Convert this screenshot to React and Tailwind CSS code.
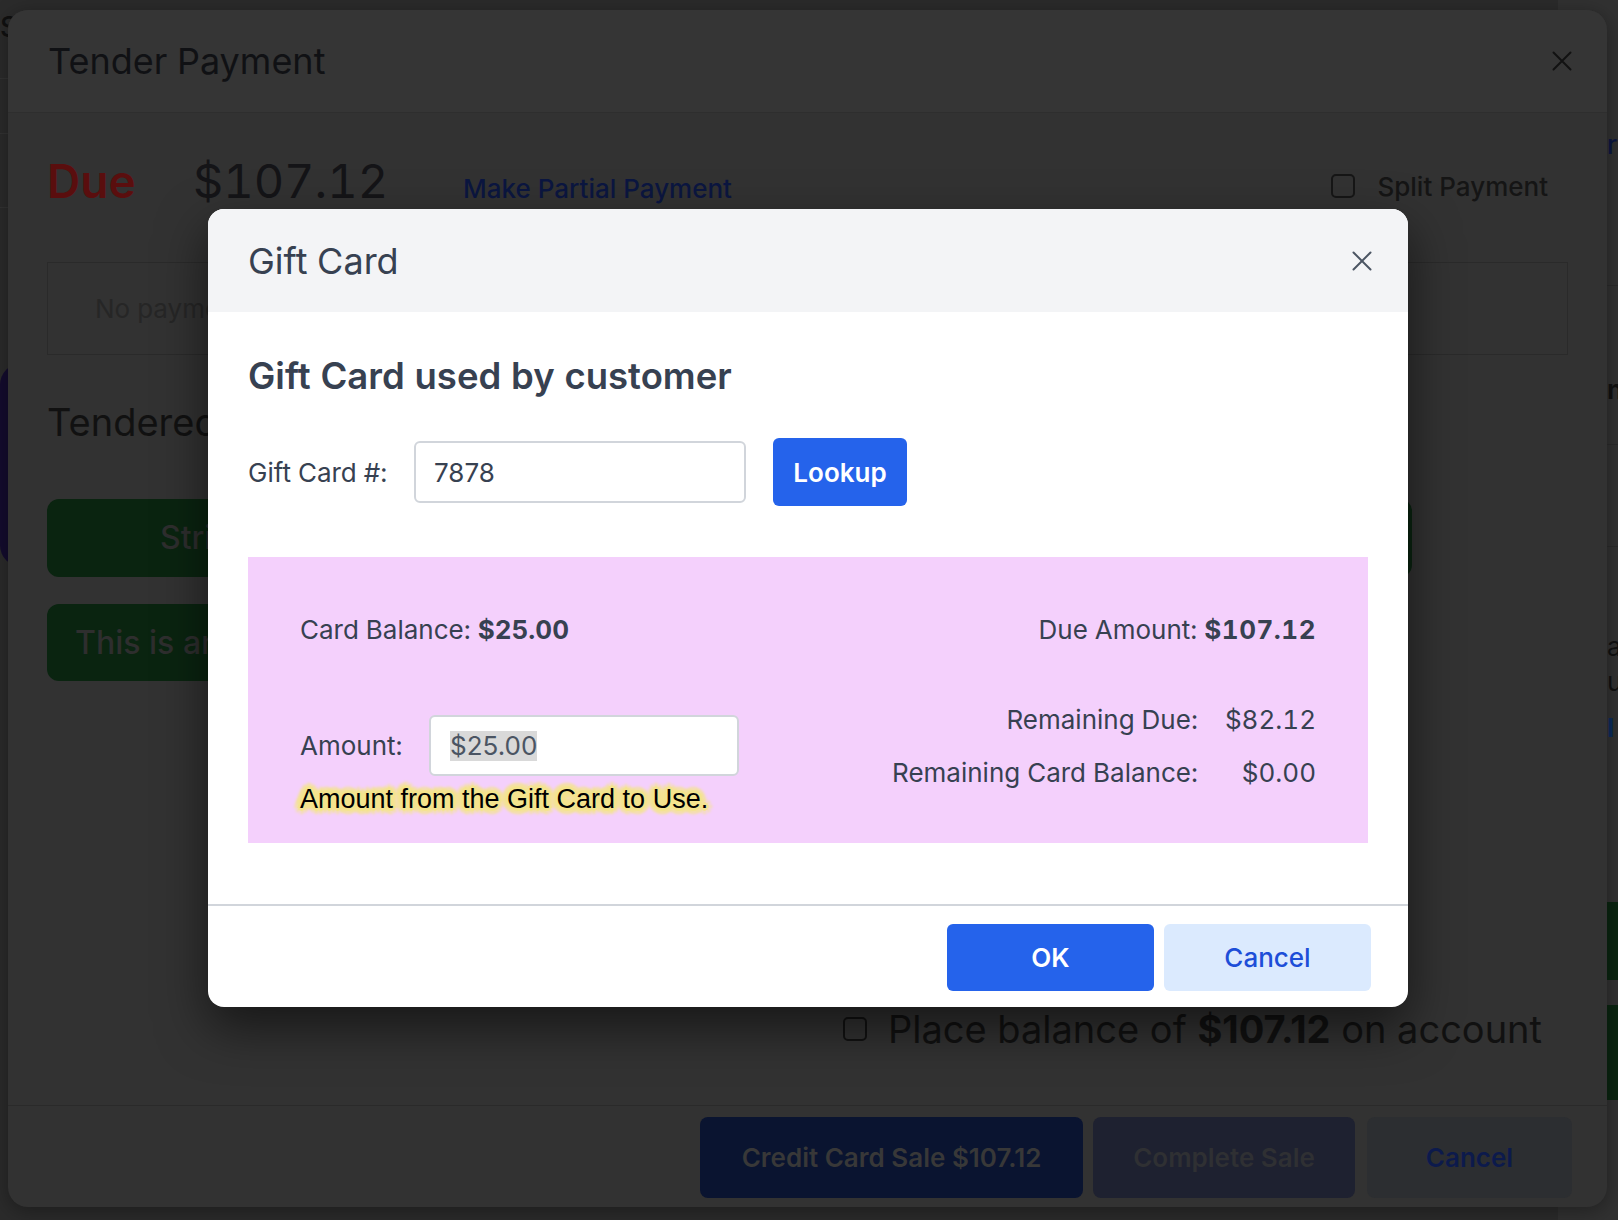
import React from 'react';

const XIcon = ({ className }) => (
  <svg viewBox="0 0 20 20" fill="none" stroke="currentColor" strokeWidth="2" strokeLinecap="round" className={className}>
    <path d="M1.5 1.5l17 17M18.5 1.5l-17 17" />
  </svg>
);

// page behind both dialogs, almost fully covered
const BackgroundPage = () => (
  <div className="flex h-full justify-between bg-[#2b2b2b]">
    <div className="w-[60px] flex flex-col">
      <div className="mt-[13px] text-[28px] leading-[28px] font-medium text-[#101010]">S</div>
      <div className="mt-[37px] border-t border-[#333333]" />
      <div className="mt-[54px] border-t border-[#333333]" />
      <div className="mt-[73px] border-t border-[#333333]" />
      <div className="mt-[155px] h-[204px] rounded-l-[22px] bg-[#140c2e]" />
    </div>
    <div className="w-[60px] flex flex-col pl-[49px] bg-[#313131] text-[26px] leading-[32px]">
      <div className="mt-[129px] font-medium text-[#0b1640] whitespace-nowrap">rt</div>
      <div className="mt-[124px] border-t border-[#2a2a2a]" />
      <div className="mt-[88px] font-bold text-[#111111]">n</div>
      <div className="mt-[38px] border-t border-[#2a2a2a]" />
      <div className="mt-[101px] border-t border-[#2a2a2a]" />
      <div className="mt-[82px] leading-[35px] text-[#111111]">a</div>
      <div className="leading-[35px] text-[#111111]">u</div>
      <div className="mt-[13px] font-bold text-[#0b2a5a]">I</div>
      <div className="mt-[158px] h-[78px] bg-[#0a2410]" />
      <div className="mt-[25px] h-[95px] bg-[#0a2410]" />
    </div>
  </div>
);

const TenderModal = () => (
  <div className="w-[1599px] h-[1197px] rounded-[20px] overflow-hidden bg-[#323232] flex flex-col shadow-[0_4px_20px_rgba(0,0,0,0.35)]">
    <div className="h-[103px] shrink-0 flex items-center justify-between pl-[40px] pr-[35px] bg-[#353535] border-b border-[#2e2e2e]">
      <h2 className="text-[36px] leading-none text-[#101114]">Tender Payment</h2>
      <XIcon className="w-[20px] h-[20px] text-[#121212]" />
    </div>

    <div className="flex-1 flex flex-col px-[39px] pt-[44px]">
      <div className="flex items-baseline">
        <span className="w-[146px] text-[46px] leading-none font-semibold text-[#5a0e0e]">Due</span>
        <span className="w-[270px] text-[47px] leading-none text-[#141417]">$107.12</span>
        <span className="text-[26px] font-medium text-[#0b1640]">Make Partial Payment</span>
        <label className="ml-auto mr-[20px] flex items-center gap-[22px] text-[26px] font-medium text-[#151515]">
          <span className="w-[24px] h-[24px] rounded-[5px] border-2 border-[#161616]" />
          <span>Split Payment</span>
        </label>
      </div>

      <div className="mt-[54px] h-[93px] border border-[#2a2a2a] flex items-center pl-[47px] text-[26px] text-[#262626]">
        No payments have been made yet
      </div>

      <h3 className="mt-[44px] text-[38px] leading-[46px] text-[#111111]">Tendered Payments</h3>

      <div className="mt-[54px] flex gap-[20px]">
        <button className="w-[700px] h-[78px] rounded-[12px] bg-[#0a2410] flex items-center pl-[113px] text-[32px] font-medium text-[#2e2e2e]">
          Stripe Terminal
        </button>
        <button className="w-[645px] h-[78px] rounded-[12px] bg-[#0a2410] text-[32px] font-medium text-[#2e2e2e]">
          Manual Entry
        </button>
      </div>
      <div className="mt-[27px] w-[900px] h-[77px] rounded-[12px] bg-[#0a2410] flex items-center pl-[28px] text-[32px] font-medium text-[#2e2e2e]">
        This is an external payment
      </div>

      <label className="mt-auto mb-[54px] flex items-center justify-end gap-[21px] pr-[26px] text-[38px] leading-[44px] text-[#111111] normal-nums">
        <span className="w-[24px] h-[24px] rounded-[5px] border-2 border-[#121212]" />
        <span>Place balance of <b className="font-bold">$107.12</b> on account</span>
      </label>
    </div>

    <div className="border-t border-[#2a2a2a] pt-[11px] pb-[9px] pr-[35px] flex justify-end text-[26px] font-semibold normal-nums">
      <button className="w-[383px] h-[81px] rounded-[8px] bg-[#0a1430] text-[#383838]">Credit Card Sale $107.12</button>
      <button className="ml-[10px] w-[262px] h-[81px] rounded-[8px] bg-[#1e2130] text-[#2f3033]">Complete Sale</button>
      <button className="ml-[12px] w-[205px] h-[81px] rounded-[8px] bg-[#2c2e31] text-[#0c1a4c]">Cancel</button>
    </div>
  </div>
);

const glow =
  '[text-shadow:6px_0_3px_#f4e48e,-6px_0_3px_#f4e48e,0_6px_3px_#f4e48e,0_-6px_3px_#f4e48e,4px_4px_3px_#f4e48e,-4px_4px_3px_#f4e48e,4px_-4px_3px_#f4e48e,-4px_-4px_3px_#f4e48e,3px_0_1px_#f4e48e,-3px_0_1px_#f4e48e,0_3px_1px_#f4e48e,0_-3px_1px_#f4e48e,2px_2px_1px_#f4e48e,-2px_-2px_1px_#f4e48e,2px_-2px_1px_#f4e48e,-2px_2px_1px_#f4e48e]';

const GiftCardModal = () => (
  <div className="w-[1200px] rounded-[16px] overflow-hidden bg-white flex flex-col shadow-[0_20px_50px_rgba(0,0,0,0.55)]">
    <div className="h-[103px] bg-[#f3f4f6] flex items-center justify-between pl-[40px] pr-[36px]">
      <h2 className="text-[36px] leading-none text-[#374151]">Gift Card</h2>
      <XIcon className="w-[20px] h-[20px] text-[#4b5563]" />
    </div>

    <div className="px-[40px] pt-[43px] pb-[61px] text-[#374151]">
      <h3 className="text-[36.5px] leading-[42px] font-semibold">Gift Card used by customer</h3>

      <div className="mt-[41px] flex items-center text-[26px]">
        <span className="w-[166px]">Gift Card #:</span>
        <div className="w-[332px] h-[62px] rounded-[6px] border-2 border-[#d1d5db] flex items-center pl-[18px] normal-nums">7878</div>
        <button className="ml-[27px] w-[134px] h-[68px] rounded-[6px] bg-[#2563eb] text-white font-semibold">Lookup</button>
      </div>

      <div className="mt-[51px] h-[286px] bg-[#f4d0fc] flex justify-between px-[52px] pt-[55px] text-[26px]">
        <div className="flex flex-col">
          <div className="leading-[36px]">Card Balance: <span className="font-bold">$25.00</span></div>
          <div className="mt-[67px] flex items-center">
            <span className="w-[129px]">Amount:</span>
            <div className="w-[310px] h-[61px] rounded-[6px] border-2 border-[#d1d5db] bg-white flex items-center pl-[19px] normal-nums">
              <span className="bg-[#d9d9d9] leading-[30px] text-[#4b5563]">$25.00</span>
            </div>
          </div>
          <div className={`mt-[7px] font-['Liberation_Sans',Arial,sans-serif] text-[27px] leading-[32px] text-black ${glow}`}>
            Amount from the Gift Card to Use.
          </div>
        </div>
        <div className="flex flex-col items-end">
          <div className="leading-[36px]">Due Amount: <span className="font-bold tracking-[0.02em]">$107.12</span></div>
          <div className="mt-[54px] grid grid-cols-[auto_auto] gap-x-[27px] gap-y-[17px] leading-[36px] text-right">
            <span>Remaining Due:</span>
            <span>$82.12</span>
            <span>Remaining Card Balance:</span>
            <span>$0.00</span>
          </div>
        </div>
      </div>
    </div>

    <div className="border-t-2 border-[#d1d5db] pt-[18px] pb-[16px] pr-[37px] flex justify-end gap-[10px] text-[26px] font-semibold">
      <button className="w-[207px] h-[67px] rounded-[6px] bg-[#2563eb] text-white">OK</button>
      <button className="w-[207px] h-[67px] rounded-[6px] bg-[#dbeafe] text-[#1d4ed8] font-medium">Cancel</button>
    </div>
  </div>
);

export default function App() {
  return (
    <div className="relative w-[1618px] h-[1220px] overflow-hidden bg-[#2b2b2b] font-['Inter',sans-serif] tabular-nums">
      <BackgroundPage />

      {/* Tender Payment dialog (dimmed) */}
      <div className="absolute inset-0 pl-[8px] pt-[10px]">
        <TenderModal />
      </div>

      {/* Gift Card dialog */}
      <div className="absolute inset-0 pl-[208px] pt-[209px]">
        <GiftCardModal />
      </div>
    </div>
  );
}
